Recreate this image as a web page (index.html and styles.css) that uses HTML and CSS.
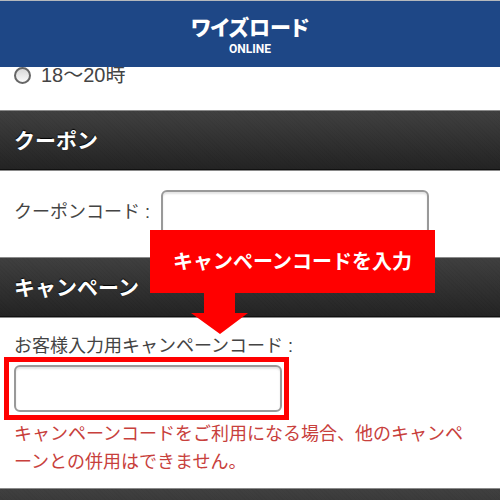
FILE: index.html
```html
<!DOCTYPE html>
<html lang="ja">
<head>
    <meta charset="UTF-8">
    <meta name="viewport" content="width=device-width, initial-scale=1.0">
    <title>ワイズロード ONLINE</title>
    <link rel="stylesheet" href="styles.css">
</head>
<body>
    <header class="site-header">
        <div class="logo">ワイズロード</div>
        <div class="logo-sub">ONLINE</div>
    </header>

    <main>
        <div class="time-option">
            <input type="radio" id="time18" name="time" value="18-20">
            <label for="time18">18〜20時</label>
        </div>

        <section>
            <h2 class="bar">クーポン</h2>
            <div class="coupon">
                <label for="couponCode">クーポンコード :</label>
                <input type="text" class="code-input" id="couponCode" name="coupon">
            </div>
        </section>

        <section class="campaign-section">
            <h2 class="bar">キャンペーン</h2>
            <div class="campaign">
                <label for="campaignCode">お客様入力用キャンペーンコード :</label>
                <div class="highlight">
                    <input type="text" class="code-input" id="campaignCode" name="campaign">
                </div>
                <p class="note">キャンペーンコードをご利用になる場合、他のキャンペーンとの併用はできません。</p>
            </div>
            <!-- Red callout pointing at the campaign code box -->
            <div class="callout">
                キャンペーンコードを入力
                <svg class="callout-arrow" width="57" height="41" viewBox="0 0 57 41" aria-hidden="true">
                    <path d="M13 0H44V20H57L29 41L0 20H13Z" fill="#ff0000"/>
                </svg>
            </div>
        </section>

        <div class="bar"></div>
    </main>
</body>
</html>
```

FILE: styles.css
```css
* {
    box-sizing: border-box;
}
body {
    margin: 0;
    height: 100vh;
    overflow: hidden;
    background-color: #fff;
    color: #444;
    font-family: "Liberation Sans", "Noto Sans CJK JP", sans-serif;
    font-size: 18px;
    line-height: 28px;
}
.site-header {
    position: fixed;
    top: 0;
    left: 0;
    right: 0;
    z-index: 2;
    height: 67px;
    padding-top: 10px;
    border-top: 1px solid #b4b8bc;
    background-color: #1e4786;
    color: #fff;
    text-align: center;
}
.logo {
    font-family: "Noto Sans CJK JP", sans-serif;
    font-size: 21px;
    font-weight: 900;
    line-height: 31px;
    font-feature-settings: "palt";
}
.logo-sub {
    font-family: Roboto, sans-serif;
    font-size: 12px;
    font-weight: 700;
    line-height: 14px;
}
main {
    padding-top: 60px;
}
.time-option {
    display: flex;
    align-items: center;
    gap: 10px;
    height: 50px;
    padding: 0 14px 20px;
    font-size: 20px;
}
.time-option input {
    appearance: none;
    width: 17px;
    height: 17px;
    margin: 0;
    border: 2px solid #666;
    border-radius: 50%;
    background: linear-gradient(#d8d8d8, #fafafa);
}
.bar {
    height: 61px;
    margin: 0;
    padding: 0 14px;
    border-top: 1px solid #8a8a8a;
    border-bottom: 1px solid #8a8a8a;
    background: repeating-linear-gradient(45deg, rgba(0, 0, 0, 0.04) 0 1px, transparent 1px 3px),
        linear-gradient(#404040, #232323);
    box-shadow: inset 0 -1px 0 #111;
    color: #fff;
    font-size: 21px;
    font-weight: 700;
    line-height: 60px;
    text-shadow: 0 -1px 1px #000;
}
.coupon {
    display: flex;
    align-items: center;
    gap: 8px;
    padding: 19px 14px 20px;
}
.coupon label {
    padding: 0 3px 4px 0;
}
.code-input {
    display: block;
    width: 268px;
    height: 47px;
    padding: 0 10px;
    border: 2px solid #999;
    border-radius: 6px;
    background-color: #fff;
    box-shadow: inset 0 2px 2px #e4e4e4;
    font: inherit;
}
.campaign-section {
    position: relative;
}
.campaign {
    padding: 14px 14px 12px;
}
.campaign label {
    display: block;
}
.highlight {
    width: fit-content;
    margin: -3px 0 0 -10px;
    padding: 3px 2px 3px 5px;
    border: 5px solid #ff0000;
}
.note {
    margin: 0;
    padding-right: 8px;
    color: #c8403c;
}
.callout {
    position: absolute;
    top: -27px;
    left: 150px;
    z-index: 1;
    width: 285px;
    height: 63px;
    background-color: #ff0000;
    color: #fff;
    font-size: 20px;
    font-weight: 700;
    line-height: 64px;
    text-align: center;
}
.callout-arrow {
    position: absolute;
    top: 63px;
    left: 41px;
}
```
